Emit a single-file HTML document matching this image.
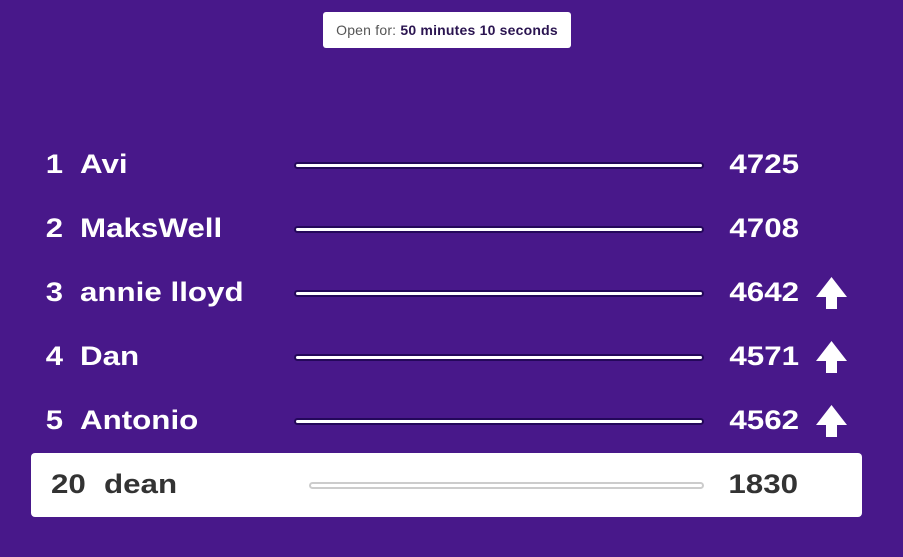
<!DOCTYPE html>
<html><head><style>
body{margin:0;width:903px;height:557px;background:#48188a;font-family:"Liberation Sans",sans-serif;position:relative;overflow:hidden}
.timer{position:absolute;left:323px;top:12px;width:248px;height:36px;background:#fff;border-radius:3px;font-size:14px;line-height:36px;text-align:center;color:#555;letter-spacing:0.2px;white-space:nowrap}
.timer b{color:#2a1450}
.row{position:absolute;left:0;width:903px;height:40px;color:#fff;font-weight:bold;font-size:27px}
.rk{position:absolute;right:840px;top:4px;transform:scaleX(1.15);transform-origin:right}
.nm{position:absolute;left:80px;top:4px;transform:scaleX(1.16);transform-origin:left;white-space:nowrap}
.bar{position:absolute;left:294px;width:406px;top:17px;height:3px;background:#fff;border:2px solid #24085a;border-radius:4px}
.sc{position:absolute;right:104px;top:4px;transform:scaleX(1.16);transform-origin:right}
.ar{position:absolute;left:815px;top:2px}
.me{position:absolute;left:31px;top:453px;width:831px;height:64px;background:#fff;border-radius:4px;color:#333;font-weight:bold;font-size:27px}
.me span{transform:scaleX(1.16)}
</style></head><body>
<div class="timer">Open for: <b>50 minutes 10 seconds</b></div>
<div class="row" style="top:145px"><span class="rk">1</span><span class="nm">Avi</span><div class="bar"></div><span class="sc">4725</span></div>
<div class="row" style="top:209px"><span class="rk">2</span><span class="nm">MaksWell</span><div class="bar"></div><span class="sc">4708</span></div>
<div class="row" style="top:273px"><span class="rk">3</span><span class="nm">annie lloyd</span><div class="bar"></div><span class="sc">4642</span><svg class="ar" width="33" height="34" viewBox="0 0 33 34"><path d="M16.5 2L32 22H22V34H11V22H1Z" fill="#fff"/></svg></div>
<div class="row" style="top:337px"><span class="rk">4</span><span class="nm">Dan</span><div class="bar"></div><span class="sc">4571</span><svg class="ar" width="33" height="34" viewBox="0 0 33 34"><path d="M16.5 2L32 22H22V34H11V22H1Z" fill="#fff"/></svg></div>
<div class="row" style="top:401px"><span class="rk">5</span><span class="nm">Antonio</span><div class="bar"></div><span class="sc">4562</span><svg class="ar" width="33" height="34" viewBox="0 0 33 34"><path d="M16.5 2L32 22H22V34H11V22H1Z" fill="#fff"/></svg></div>
<div class="me"><span style="position:absolute;left:20px;top:16px;transform-origin:left">20</span><span style="position:absolute;left:73px;top:16px;transform-origin:left">dean</span><div style="position:absolute;left:278px;top:29px;width:391px;height:3px;border:2px solid #ccc;border-radius:4px;background:#fff"></div><span style="position:absolute;right:64px;top:16px;transform-origin:right">1830</span></div>
</body></html>
